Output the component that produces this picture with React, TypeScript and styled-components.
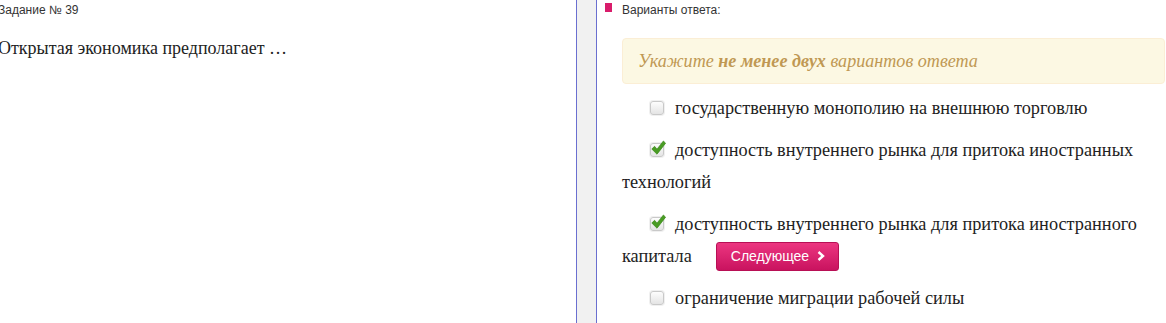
import styled, { createGlobalStyle } from 'styled-components';

const Global = createGlobalStyle`
  html, body {
    margin: 0;
    padding: 0;
    background: #fff;
    overflow: hidden;
  }
  body {
    font-family: 'Liberation Sans', Arial, sans-serif;
    color: #333;
  }
`;

const Page = styled.div`
  display: flex;
  width: 1166px;
  height: 323px;
`;

const Question = styled.div`
  width: 576px;
  flex-shrink: 0;
  overflow: hidden;
`;

const TaskNumber = styled.div`
  font-size: 12px;
  line-height: 20px;
  color: #333;
  margin-left: -2px;
`;

const QuestionText = styled.p`
  margin: 16px 0 0 -2px;
  font-family: 'Liberation Serif', 'Times New Roman', serif;
  font-size: 18px;
  line-height: 24px;
  color: #222;
`;

const Divider = styled.div`
  width: 19px;
  flex-shrink: 0;
  border-left: 1px solid #6a6fd0;
  border-right: 1px solid #6a6fd0;
  background: #f1f1f1;
`;

const Answers = styled.div`
  flex: 1;
  padding: 0 1px 0 25px;
  min-width: 0;
`;

const Heading = styled.div`
  position: relative;
  font-size: 12px;
  line-height: 20px;
  color: #333;

  &::before {
    content: '';
    position: absolute;
    left: -17px;
    top: 3px;
    width: 7px;
    height: 9px;
    background: #d91c6b;
  }
`;

const Alert = styled.div`
  margin-top: 18px;
  height: 44px;
  display: flex;
  align-items: center;
  padding: 0 15px;
  background: #fcf8e3;
  border: 1px solid #fbeed5;
  border-radius: 4px;
  font-family: 'Liberation Serif', 'Times New Roman', serif;
  font-style: italic;
  font-size: 18.1px;
  color: #c09853;

  b {
    font-weight: bold;
  }
`;

const Options = styled.div`
  margin-top: 8px;
`;

const Option = styled.p`
  margin: 0 0 10px;
  text-indent: 28px;
  font-family: 'Liberation Serif', 'Times New Roman', serif;
  font-size: 18.3px;
  line-height: 32px;
  color: #222;
`;

const Box = styled.span`
  display: inline-block;
  position: relative;
  width: 12px;
  height: 12px;
  margin-right: 11px;
  vertical-align: -1px;
  text-indent: 0;
  border: 1px solid #c9c9c9;
  border-radius: 3px;
  background: linear-gradient(#fdfdfd, #e4e4e4);
  box-shadow: 0 0 0 1px #f0f0f0;

  svg {
    position: absolute;
    left: 0;
    top: -4px;
  }
`;

const NextButton = styled.button`
  display: inline-flex;
  align-items: center;
  gap: 8px;
  margin-left: 24px;
  height: 29px;
  padding: 0 13px 0 14px;
  vertical-align: 1px;
  text-indent: 0;
  border: 1px solid #b80f55;
  border-radius: 3px;
  background: linear-gradient(#ec3680, #c9135f);
  color: #fff;
  font-family: 'Liberation Sans', Arial, sans-serif;
  font-size: 14px;
  line-height: 1;
  cursor: pointer;
`;

const Check = () => (
  <svg width="15" height="16" viewBox="0 0 15 16">
    <path
      d="M0.8 9 L3.6 6.3 L6 9.2 L12.4 1 L14.6 3.2 L6 14.2 Z"
      fill="#4a9c24"
      stroke="#3a8a1a"
      strokeWidth="0.7"
      strokeLinejoin="round"
    />
  </svg>
);

const Chevron = () => (
  <svg width="8" height="10" viewBox="0 0 8 10">
    <path d="M1.5 1 L6 5 L1.5 9" fill="none" stroke="#fff" strokeWidth="2.4" />
  </svg>
);

const CheckBox = ({ checked }: { checked?: boolean }) => (
  <Box>{checked && <Check />}</Box>
);

const options = [
  { text: 'государственную монополию на внешнюю торговлю', checked: false },
  { text: 'доступность внутреннего рынка для притока иностранных технологий', checked: true },
  { text: 'доступность внутреннего рынка для притока иностранного капитала', checked: true, next: true },
  { text: 'ограничение миграции рабочей силы', checked: false },
];

export default function App() {
  return (
    <Page>
      <Global />
      <Question>
        <TaskNumber>Задание № 39</TaskNumber>
        <QuestionText>Открытая экономика предполагает …</QuestionText>
      </Question>
      <Divider />
      <Answers>
        <Heading>Варианты ответа:</Heading>
        <Alert>
          <span>
            Укажите <b>не менее двух</b> вариантов ответа
          </span>
        </Alert>
        <Options>
          {options.map((o) => (
            <Option key={o.text}>
              <CheckBox checked={o.checked} />
              {o.text}
              {o.next && (
                <NextButton>
                  Следующее <Chevron />
                </NextButton>
              )}
            </Option>
          ))}
        </Options>
      </Answers>
    </Page>
  );
}
